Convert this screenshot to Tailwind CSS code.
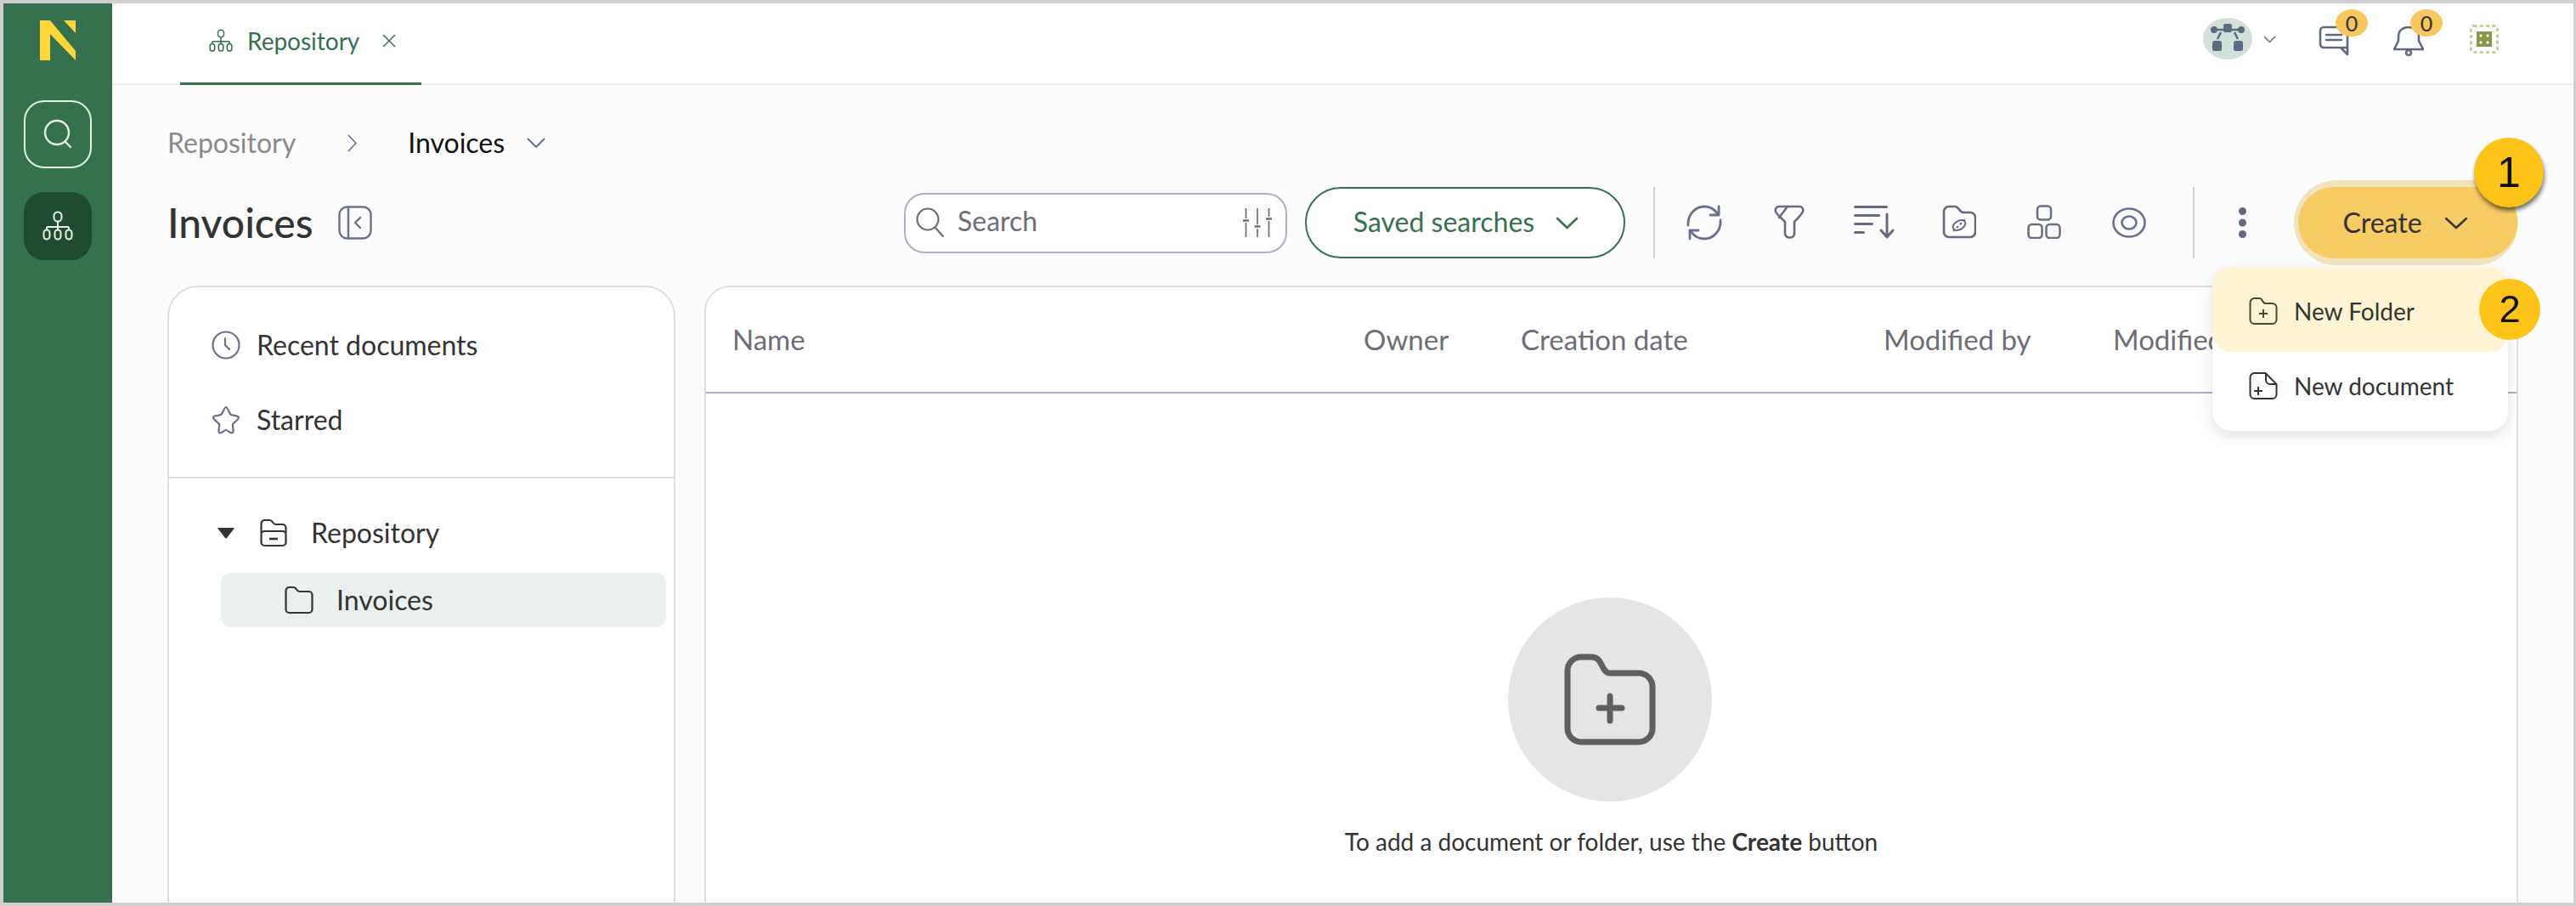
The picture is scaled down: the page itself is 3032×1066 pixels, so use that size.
<!DOCTYPE html>
<html lang="en">
<head>
<meta charset="utf-8">
<title>Repository</title>
<script src="https://cdn.jsdelivr.net/npm/@tailwindcss/browser@4"></script>
</head>
<body class="m-0 bg-white">
<div class="relative h-[1066px] w-[3032px] overflow-hidden border-y-[4px] border-l-[4px] border-r-[3px] border-[#cfcfcf] flex font-['Lato',sans-serif]">
  <!-- rail -->
  <aside class="w-[128px] shrink-0 bg-[#35704f] flex flex-col items-center">
    <svg class="mt-[20px] w-[42px] h-[47px]" viewBox="0 0 42 47"><path fill="#fdd63a" d="M0 0H12L42 36V47L12 16V47H0Z"/><path fill="#fdd63a" d="M28 0H42V15Z"/></svg>
    <div class="mt-[47px] w-[80px] h-[80px] rounded-[24px] border-[2px] border-[#e3f0e6] flex items-center justify-center">
      <svg class="w-[36px] h-[36px]" viewBox="0 0 36 36" fill="none" stroke="#e3f0e6" stroke-width="2.4" stroke-linecap="round"><circle cx="17" cy="16" r="14"/><path d="M27 27l6 6"/></svg>
    </div>
    <div class="mt-[28px] w-[80px] h-[80px] rounded-[24px] bg-[#1f4a33] flex items-center justify-center">
      <svg class="w-[36px] h-[36px]" viewBox="0 0 36 36" fill="none" stroke="#e3f0e6" stroke-width="2"><rect x="13.5" y="1.5" width="9" height="11" rx="4.5"/><path d="M18 13v6M5 19h26M5 19v3M18 19v3M31 19v3"/><rect x="1.5" y="22.5" width="7" height="11" rx="3.5"/><rect x="14.500" y="22.500" width="7" height="11" rx="3.5"/><rect x="27.5" y="22.5" width="7" height="11" rx="3.5"/></svg>
    </div>
  </aside>

  <div class="flex-1 min-w-0 flex flex-col bg-[#fcfcfc]">
    <!-- top bar -->
    <header class="h-[96px] shrink-0 bg-white border-b-[2px] border-[#eeeeee] flex items-start pl-[80px]">
      <div class="h-[96px] w-[284px] border-b-[3px] border-[#35704f] flex items-center pl-[34px] pb-[6px] text-[#35704f] text-[28px]">
        <svg class="w-[28px] h-[28px] mr-[17px]" viewBox="0 0 36 36" fill="none" stroke="#35704f" stroke-width="2"><rect x="13.500" y="1.500" width="9" height="11" rx="4.500"/><path d="M18 13v6M5 19h26M5 19v3M18 19v3M31 19v3"/><rect x="1.500" y="22.500" width="7" height="11" rx="3.500"/><rect x="14.500" y="22.500" width="7" height="11" rx="3.500"/><rect x="27.500" y="22.500" width="7" height="11" rx="3.500"/></svg>
        <span>Repository</span>
        <svg class="w-[16px] h-[16px] ml-[27px]" viewBox="0 0 16 16" fill="none" stroke="#35704f" stroke-width="1.500"><path d="M1 1l14 14M15 1L1 15"/></svg>
      </div>
      <div class="ml-auto flex items-start pr-[88px]">
        <div class="mt-[17px] w-[58px] h-[49px] rounded-[50%] bg-[#d3e0da] flex items-center justify-center">
          <svg class="w-[42px] h-[40px]" viewBox="0 0 42 40"><g fill="#5f6980"><circle cx="5" cy="9" r="4"/><circle cx="37" cy="9" r="4"/><rect x="16" y="2" width="10" height="10" rx="2.500"/><rect x="3" y="22" width="11" height="12" rx="2.500"/><rect x="28" y="22" width="11" height="12" rx="2.500"/></g><path d="M9 9h7M26 9h7M13 12l-4 8M29 12l4 8" stroke="#5f6980" stroke-width="2.500" fill="none"/></svg>
        </div>
        <svg class="mt-[38px] ml-[13px] w-[15px] h-[9px]" viewBox="0 0 15 9" fill="none" stroke="#5f6980" stroke-width="1.500"><path d="M1 1l6.500 6.500L14 1"/></svg>
        <div class="relative ml-[50px] mt-[26px] w-[36px] h-[36px]">
          <svg class="w-[36px] h-[36px]" viewBox="0 0 36 36" fill="none" stroke="#5f6980" stroke-width="2.600" stroke-linejoin="round" stroke-linecap="round"><path d="M34 26H6a4 4 0 0 1-4-4V6a4 4 0 0 1 4-4h24a4 4 0 0 1 4 4v28l-8-8"/><path d="M9 11h18M9 17h18"/></svg>
          <span class="absolute left-[20px] top-[-19px] w-[38px] h-[32px] rounded-[50%] bg-[#f7c75d] flex items-center justify-center text-[25px] leading-none text-[#333]">0</span>
        </div>
        <div class="relative ml-[52px] mt-[26px] w-[36px] h-[36px]">
          <svg class="w-[36px] h-[36px]" viewBox="0 0 36 36" fill="none" stroke="#5f6980" stroke-width="2.600" stroke-linejoin="round"><path d="M1 28h34l-5-10V13C30 6 25 2 18 2S6 6 6 13v5Z"/><circle cx="18" cy="32" r="3"/></svg>
          <span class="absolute left-[20px] top-[-19px] w-[38px] h-[32px] rounded-[50%] bg-[#f7c75d] flex items-center justify-center text-[25px] leading-none text-[#333]">0</span>
        </div>
        <div class="ml-[54px] mt-[25px] w-[34px] h-[34px]">
          <svg class="w-[34px] h-[34px]" viewBox="0 0 34 34"><rect x="1.500" y="1.500" width="31" height="31" rx="3" fill="none" stroke="#c6cf8e" stroke-width="3" stroke-dasharray="4 3.300"/><rect x="8" y="8" width="18" height="18" fill="#8c9449"/><path fill="#fff" d="M13 11l2 2-2 2-2-2zM21 11l2 2-2 2-2-2zM13 19l2 2-2 2-2-2zM21 19l2 2-2 2-2-2z"/></svg>
        </div>
      </div>
    </header>

    <!-- content -->
    <main class="flex-1 min-h-0 flex flex-col pl-[65px] pr-[65px]">
      <div class="mt-[44px] h-[48px] shrink-0 flex items-center text-[32px]">
        <span class="text-[#8a8a8a]">Repository</span>
        <svg class="ml-[61px] w-[11px] h-[21px]" viewBox="0 0 11 21" fill="none" stroke="#5f6980" stroke-width="1.600"><path d="M1 1l9 9.500L1 20"/></svg>
        <span class="ml-[60px] text-[#111]">Invoices</span>
        <svg class="ml-[26px] w-[22px] h-[12px]" viewBox="0 0 22 12" fill="none" stroke="#5f6980" stroke-width="1.800"><path d="M1 1l10 10L21 1"/></svg>
      </div>

      <div class="mt-[28px] h-[84px] shrink-0 flex items-center">
        <h1 class="text-[48px] font-medium text-[#333]">Invoices</h1>
        <svg class="ml-[29px] w-[40px] h-[40px]" viewBox="0 0 40 40" fill="none" stroke="#6a6f8c" stroke-width="2.400" stroke-linecap="round" stroke-linejoin="round"><rect x="1.500" y="1.500" width="37" height="37" rx="9"/><path d="M12 2v36M26 14l-6 6 6 6"/></svg>

        <div class="ml-auto w-[451px] h-[71px] rounded-[24px] border-[2px] border-[#aeaec6] bg-white flex items-center pl-[12px] pr-[16px]">
          <svg class="w-[34px] h-[36px]" viewBox="0 0 34 36" fill="none" stroke="#6d6d78" stroke-width="2.200" stroke-linecap="round"><circle cx="14" cy="14" r="12.500"/><path d="M23 24l9 10"/></svg>
          <span class="ml-[15px] mb-[4px] text-[32px] text-[#6d6d78]">Search</span>
          <svg class="ml-auto w-[34px] h-[34px]" viewBox="0 0 34 34" fill="none" stroke="#6d6d78" stroke-width="1.700"><path d="M3.500 0v12M3.500 17v17M17 0v19M17 24v10M30.500 0v10M30.500 15v19"/><path d="M0 14.500h7M13.500 21.500h7M27 12.500h7" stroke-width="2.600"/></svg>
        </div>
        <div class="ml-[21px] w-[377px] h-[84px] rounded-[42px] border-[2px] border-[#35704f] bg-white flex items-center justify-center gap-[25px] pl-[2px] text-[#35704f] text-[32px]">
          <span class="mb-[2px]">Saved searches</span>
          <svg class="w-[27px] h-[15px]" viewBox="0 0 27 15" fill="none" stroke="#35704f" stroke-width="2.600" stroke-linecap="round"><path d="M2 2l11.500 11L25 2"/></svg>
        </div>
        <div class="ml-[33px] w-[2px] h-[84px] bg-[#cfcfd6]"></div>
        <div class="ml-[8px] flex">
          <div class="w-[100px] flex justify-center">
            <svg class="w-[42px] h-[42px]" viewBox="0 0 42 42" fill="none" stroke="#6a6f8c" stroke-width="2.800" stroke-linecap="round" stroke-linejoin="round"><path d="M2 24C1 12 10 2 21 2c7 0 12 3 16 9M40 18c1 12-8 22-19 22-7 0-12-3-16-9"/><path d="M38 2v10H28M4 40V30h10"/></svg>
          </div>
          <div class="w-[100px] flex justify-center">
            <svg class="w-[36px] h-[40px]" viewBox="0 0 36 40" fill="none" stroke="#666a80" stroke-width="2.600" stroke-linejoin="round" stroke-linecap="round"><path d="M6 2H30c3 0 5 3 4 6-2 4-7 9-10 12v14c0 6-11 6-11 0V20C10 17 4 12 2 8 1 5 3 2 6 2Z"/><path d="M16 2 6 15"/></svg>
          </div>
          <div class="w-[100px] flex justify-center">
            <svg class="w-[48px] h-[40px]" viewBox="0 0 48 40" fill="none" stroke="#666a80" stroke-width="3" stroke-linecap="round"><path d="M1.500 2.500h37M1.500 12.500h28M1.500 22.500h20M1.500 32.500h10"/><path d="M39 11v27M32 30l7 8 7-8" stroke-linejoin="round"/></svg>
          </div>
          <div class="w-[100px] flex justify-center">
            <svg class="w-[40px] h-[40px]" viewBox="0 0 40 40" fill="none" stroke="#666a80" stroke-width="2.600" stroke-linejoin="round"><path d="M2 8a6 6 0 0 1 6-6h7c5 0 5 7 10 7h8a6 6 0 0 1 6 6v17a6 6 0 0 1-6 6H8a6 6 0 0 1-6-6Z"/><ellipse cx="20" cy="24" rx="8" ry="5" transform="rotate(-30 20 24)" stroke-width="2"/><path d="M13 31l14-14" stroke-width="2" stroke-dasharray="3 2.500"/></svg>
          </div>
          <div class="w-[100px] flex justify-center">
            <svg class="w-[40px] h-[40px]" viewBox="0 0 40 40" fill="none" stroke="#6a6f8c" stroke-width="2.600"><rect x="12" y="1.500" width="16" height="16" rx="4"/><rect x="1.500" y="23" width="16" height="16" rx="4"/><rect x="22.500" y="23" width="16" height="16" rx="4"/></svg>
          </div>
          <div class="w-[100px] flex justify-center items-center">
            <svg class="w-[40px] h-[36px]" viewBox="0 0 40 36" fill="none" stroke="#6a6f8c" stroke-width="2.600"><ellipse cx="20" cy="18" rx="18.500" ry="16.500"/><ellipse cx="20" cy="18" rx="8.500" ry="7.500"/></svg>
          </div>
        </div>
        <div class="ml-[25px] w-[2px] h-[84px] bg-[#cfcfd6]"></div>
        <svg class="ml-[52px] w-[9px] h-[36px]" viewBox="0 0 9 36" fill="#5f6980"><circle cx="4.500" cy="4.500" r="4.500"/><circle cx="4.500" cy="18" r="4.500"/><circle cx="4.500" cy="31.500" r="4.500"/></svg>
        <div class="ml-[56px] -my-[8px] w-[264px] h-[100px] shrink-0 rounded-[50px] bg-[#f0e3bb] pl-[5px] pr-[1px] py-[8px]">
          <div class="h-[84px] rounded-[42px] bg-[#f6cb64] flex items-center justify-center gap-[26px] pr-[6px] text-[32px] text-[#333]">
            <span>Create</span>
            <svg class="w-[28px] h-[15px]" viewBox="0 0 28 15" fill="none" stroke="#333" stroke-width="2.400" stroke-linecap="round"><path d="M2 2l12 11L26 2"/></svg>
          </div>
        </div>
      </div>

      <div class="mt-[32px] flex-1 min-h-0 flex gap-[34px]">
        <!-- left tree -->
        <section class="w-[598px] shrink-0 rounded-t-[36px] border-x-[2px] border-t-[2px] border-[#dedee3] bg-white flex flex-col text-[#333] text-[32px]">
          <div class="h-[225px] shrink-0 border-b-[2px] border-[#dcdcdf] pt-[43px] pl-[50px]">
            <div class="h-[50px] flex items-center">
              <svg class="w-[34px] h-[34px]" viewBox="0 0 34 34" fill="none" stroke="#6a6f8c" stroke-width="2.200" stroke-linecap="round"><circle cx="17" cy="17" r="15.500"/><path d="M16 9v8l5 5"/></svg>
              <span class="ml-[19px]">Recent documents</span>
            </div>
            <div class="mt-[38px] h-[50px] flex items-center">
              <svg class="w-[34px] h-[34px]" viewBox="0 0 34 34" fill="none" stroke="#6a6f8c" stroke-width="2.200" stroke-linejoin="round"><path d="M17 2c2 0 4 8 6 9s9 1 9 3c0 3-6 6-7 8s2 8 0 10-6-3-8-3-6 5-8 3 1-8 0-10-7-5-7-8c0-2 7-2 9-3s4-9 6-9Z"/></svg>
              <span class="ml-[19px]">Starred</span>
            </div>
          </div>
          <div class="pt-[40px] pl-[57px] h-[88px] shrink-0 flex items-center">
            <svg class="w-[20px] h-[14px]" viewBox="0 0 20 14" fill="#333"><path d="M1 1h18q1 0 .500 1L11 13q-1 1-2 0L.500 2Q0 1 1 1Z"/></svg>
            <svg class="ml-[30px] w-[32px] h-[34px]" viewBox="0 0 32 34" fill="none" stroke="#333" stroke-width="2.200" stroke-linejoin="round"><path d="M1.500 17V6a4 4 0 0 1 4-4h6c4 0 3 5 7 5h8a4 4 0 0 1 4 4v6"/><rect x="1.500" y="15" width="29" height="17" rx="4"/><path d="M11 24h10" stroke-width="2.600"/></svg>
            <span class="ml-[28px]">Repository</span>
          </div>
          <div class="ml-[61px] mr-[9px] mt-[23px] h-[64px] rounded-[12px] bg-[#e9f0ed] flex items-center pl-[75px]">
            <svg class="w-[34px] h-[34px]" viewBox="0 0 34 34" fill="none" stroke="#333" stroke-width="2.200" stroke-linejoin="round"><path d="M1.500 6a4 4 0 0 1 4-4h5c4 0 3 5 7 5h11a4 4 0 0 1 4 4v17a4 4 0 0 1-4 4h-23a4 4 0 0 1-4-4Z"/></svg>
            <span class="ml-[27px]">Invoices</span>
          </div>
        </section>

        <!-- table -->
        <section class="flex-1 min-w-0 rounded-t-[30px] border-x-[2px] border-t-[2px] border-[#dedee3] bg-white flex flex-col">
          <div class="relative h-[125px] shrink-0 border-b-[2px] border-[#aeaec6] text-[33px] text-[#6d6d78]">
            <span class="absolute left-[31px] top-[37px]">Name</span>
            <span class="absolute left-[774px] top-[37px]">Owner</span>
            <span class="absolute left-[959px] top-[37px]">Creation date</span>
            <span class="absolute left-[1386px] top-[37px]">Modified by</span>
            <span class="absolute left-[1656px] top-[37px]">Modified</span>
          </div>
          <div class="flex flex-col items-center">
            <div class="mt-[240px] mr-[3px] w-[240px] h-[240px] rounded-full bg-[#e5e5e5] flex items-center justify-center">
              <svg class="w-[108px] h-[108px]" viewBox="0 0 108 108" fill="none" stroke="#5f5f5f" stroke-width="7" stroke-linecap="round" stroke-linejoin="round"><path d="M4 20a16 16 0 0 1 16-16h12c8 0 10 5 13 11 2 4 4 8 9 8h34a16 16 0 0 1 16 16v49a16 16 0 0 1-16 16H20a16 16 0 0 1-16-16Z"/><path d="M54 50v29M41 64h27"/></svg>
            </div>
            <p class="mt-[26px] text-[28px] text-[#333]">To add a document or folder, use the <b>Create</b> button</p>
          </div>
        </section>
      </div>
    </main>
  </div>

  <!-- dropdown menu -->
  <div class="absolute left-[2600px] top-[310px] w-[348px] h-[193px] rounded-[22px] bg-white shadow-[0_6px_16px_rgba(0,0,0,0.12)] text-[28px] text-[#333]">
    <div class="h-[100px] rounded-[22px] bg-[#fef4d3] flex items-center pl-[43px] pt-[4px]">
      <svg class="w-[34px] h-[34px]" viewBox="0 0 34 34" fill="none" stroke="#4c452e" stroke-width="2" stroke-linejoin="round"><path d="M1.500 7a5 5 0 0 1 5-5h6c4 0 3 6 7 6h8a5 5 0 0 1 5 5v14a5 5 0 0 1-5 5h-21a5 5 0 0 1-5-5Z"/><path d="M17 15v10M12 20h10"/></svg>
      <span class="ml-[19px]">New Folder</span>
    </div>
    <div class="h-[72px] mt-[4px] flex items-center pl-[43px]">
      <svg class="w-[34px] h-[34px]" viewBox="0 0 34 34" fill="none" stroke="#333" stroke-width="2" stroke-linejoin="round"><path d="M1.500 7a5 5 0 0 1 5-5h13L32.500 15v12a5 5 0 0 1-5 5h-21a5 5 0 0 1-5-5Z"/><path d="M20 2v8a5 5 0 0 0 5 5h7M11 18v10M6 23h10"/></svg>
      <span class="ml-[19px]">New document</span>
    </div>
  </div>

  <!-- step badges -->
  <div class="absolute left-[2908px] top-[158px] w-[82px] h-[82px] rounded-full bg-[#fcc419] shadow-[1px_4px_5px_rgba(0,0,0,0.55)] flex items-center justify-center font-['Liberation_Sans',sans-serif] text-[50px] text-[#111]">1</div>
  <div class="absolute left-[2914px] top-[324px] w-[72px] h-[72px] rounded-full bg-[#fcc419] flex items-center justify-center font-['Liberation_Sans',sans-serif] text-[45px] text-[#111]">2</div>
</div>
</body>
</html>
